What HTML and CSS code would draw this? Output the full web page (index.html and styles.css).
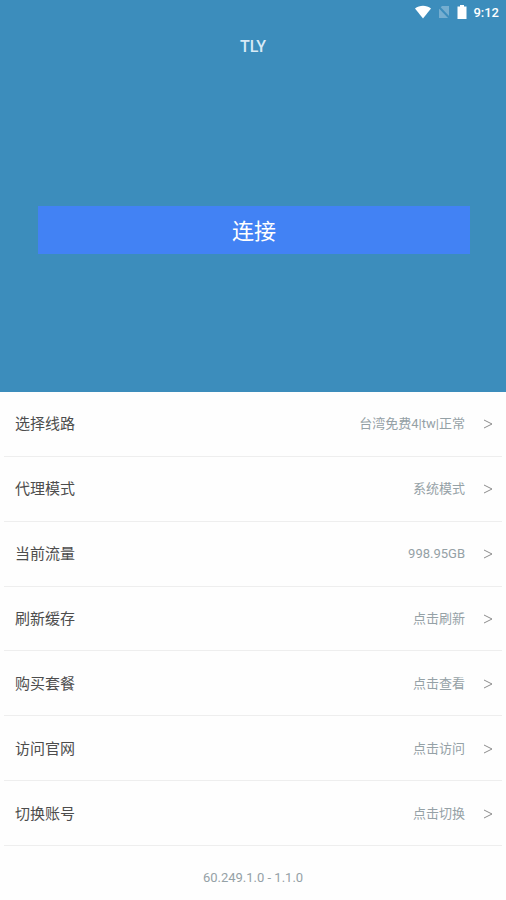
FILE: index.html
```html
<!DOCTYPE html>
<html lang="zh-CN">
<head>
<meta charset="utf-8">
<meta name="viewport" content="width=device-width, initial-scale=1">
<title>TLY</title>
<link rel="stylesheet" href="styles.css">
</head>
<body>
<header class="hero">
  <div class="status">
    <svg class="wifi" viewBox="0 0 18 14" aria-hidden="true"><path d="M1 3.600C5.500-.2 12.500-.2 17 3.600L9 13.500z"/></svg>
    <svg class="sim" viewBox="0 0 12 14" aria-hidden="true"><path class="card" d="M4 1h7v12H1V4z"/><path class="slash" d="M1 2l10.500 11"/></svg>
    <svg class="battery" viewBox="0 0 10 14" aria-hidden="true"><path d="M3 0h4v1.500h2.500V14h-9V1.500H3z"/></svg>
    <span>9:12</span>
  </div>
  <h1 class="title">TLY</h1>
  <button class="connect" type="button">连接</button>
</header>
<main class="list">
  <a class="row" href="#"><span class="label">选择线路</span><span class="value">台湾免费4|tw|正常</span><svg class="arrow" viewBox="0 0 10 10" aria-hidden="true"><path d="M1 1l8 4-8 4"/></svg></a>
  <a class="row" href="#"><span class="label">代理模式</span><span class="value">系统模式</span><svg class="arrow" viewBox="0 0 10 10" aria-hidden="true"><path d="M1 1l8 4-8 4"/></svg></a>
  <a class="row" href="#"><span class="label">当前流量</span><span class="value">998.95GB</span><svg class="arrow" viewBox="0 0 10 10" aria-hidden="true"><path d="M1 1l8 4-8 4"/></svg></a>
  <a class="row" href="#"><span class="label">刷新缓存</span><span class="value">点击刷新</span><svg class="arrow" viewBox="0 0 10 10" aria-hidden="true"><path d="M1 1l8 4-8 4"/></svg></a>
  <a class="row" href="#"><span class="label">购买套餐</span><span class="value">点击查看</span><svg class="arrow" viewBox="0 0 10 10" aria-hidden="true"><path d="M1 1l8 4-8 4"/></svg></a>
  <a class="row" href="#"><span class="label">访问官网</span><span class="value">点击访问</span><svg class="arrow" viewBox="0 0 10 10" aria-hidden="true"><path d="M1 1l8 4-8 4"/></svg></a>
  <a class="row" href="#"><span class="label">切换账号</span><span class="value">点击切换</span><svg class="arrow" viewBox="0 0 10 10" aria-hidden="true"><path d="M1 1l8 4-8 4"/></svg></a>
</main>
<footer class="version">60.249.1.0 - 1.1.0</footer>
</body>
</html>
```

FILE: styles.css
```css
* {
  box-sizing: border-box;
}

body {
  margin: 0;
  min-height: 100vh;
  display: flex;
  flex-direction: column;
  background: #fefefe;
  font-family: Roboto, "Noto Sans CJK SC", sans-serif;
}

.hero {
  display: flex;
  flex-direction: column;
  padding-bottom: 138px;
  background: #3c8dbc;
  color: #fff;
}

.status {
  display: flex;
  align-items: center;
  justify-content: flex-end;
  height: 24px;
  padding-right: 7px;
  font-size: 13px;
  font-weight: 500;
}

.status svg {
  height: 14px;
  fill: #fff;
}

.wifi {
  width: 18px;
  margin-right: 6px;
}

.sim {
  width: 12px;
  margin-right: 7px;
}

.sim .card {
  fill: #75aed0;
}

.sim .slash {
  stroke: #3c8dbc;
  stroke-width: 2;
}

.battery {
  width: 10px;
  margin-right: 6px;
}

.title {
  margin: 13px 0 0;
  font-size: 16px;
  line-height: 20px;
  font-weight: 500;
  text-align: center;
  color: #d8eaf6;
}

.connect {
  margin: 149px 36px 0 38px;
  height: 48px;
  padding: 0 0 2px;
  border: 0;
  background: #4282f4;
  color: #fff;
  font: inherit;
  font-size: 22px;
}

.list {
  flex: 1;
  display: grid;
  grid-auto-rows: 1fr;
  padding: 0 4px;
}

.row {
  display: flex;
  align-items: center;
  min-height: 48px;
  padding: 1px 9px 0 11px;
  border-bottom: 1px solid #eee;
  color: #4d4d4d;
  text-decoration: none;
}

.label {
  flex: 1;
  font-size: 15px;
  line-height: 22px;
}

.value {
  font-size: 13px;
  line-height: 20px;
  color: #95a1a6;
}

.arrow {
  width: 10px;
  height: 10px;
  margin-left: 18px;
  fill: none;
  stroke: #8c8c8c;
}

.version {
  padding: 23px 0 13px;
  font-size: 13px;
  line-height: 18px;
  text-align: center;
  color: #95a1a6;
}
```
